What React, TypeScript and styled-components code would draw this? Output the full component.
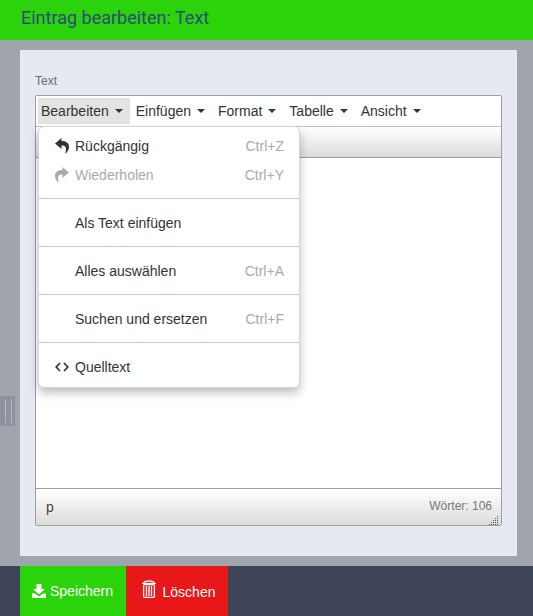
import styled, { createGlobalStyle } from "styled-components";

const GlobalStyle = createGlobalStyle`
html, body {
  margin: 0;
  padding: 0;
  background: #a0a4ad;
}
* {
  box-sizing: border-box;
}
`;

const menus = ["Bearbeiten", "Einfügen", "Format", "Tabelle", "Ansicht"];

function UndoIcon() {
  return (
    <svg width="14" height="16" viewBox="0 0 14 16">
      <path d="M6.5 0 L0 5.5 L6.5 11 V7.6 C9.4 7.4 10.8 8.6 10.9 10.8 C11 12.6 10.8 14.4 10.2 16 C12.8 14 14 11.4 14 8.8 C14 5 11 3 6.5 3 Z" fill="currentColor" />
    </svg>
  );
}

function RedoIcon() {
  return (
    <svg width="14" height="16" viewBox="0 0 14 16">
      <path d="M7.5 0 L14 5.5 L7.5 11 V7.6 C4.6 7.4 3.2 8.6 3.1 10.8 C3 12.6 3.2 14.4 3.8 16 C1.2 14 0 11.4 0 8.8 C0 5 3 3 7.5 3 Z" fill="currentColor" />
    </svg>
  );
}

function CodeIcon() {
  return (
    <svg width="14" height="10" viewBox="0 0 14 10">
      <path d="M5 1 L1.2 5 L5 9 M9 1 L12.8 5 L9 9" fill="none" stroke="currentColor" strokeWidth="1.7" />
    </svg>
  );
}

function SaveIcon() {
  return (
    <svg width="14" height="14" viewBox="0 0 14 14">
      <path d="M4.5 0 H9.5 V5 H13 L7 10.5 L1 5 H4.5 Z M0 9.5 H3 L7 12.5 L11 9.5 H14 V14 H0 Z" fill="#fff" />
    </svg>
  );
}

function TrashIcon() {
  return (
    <svg width="14" height="18" viewBox="0 0 14 18">
      <path d="M1.5 2.6 C3.5 0.2 10.5 0.2 12.5 2.6" fill="none" stroke="#fff" strokeWidth="1.3" />
      <rect x="0" y="2.8" width="14" height="1.2" fill="#fff" />
      <rect x="1.6" y="4.6" width="10.8" height="12.8" rx="1" fill="none" stroke="#fff" strokeWidth="1.3" />
      <path d="M4.5 6 V16 M7 6 V16 M9.5 6 V16" stroke="#fff" strokeWidth="1.3" />
    </svg>
  );
}

function ResizeGrip() {
  const dots: [number, number][] = [];
  for (let row = 0; row < 5; row++) {
    for (let col = 4 - row; col < 5; col++) {
      dots.push([col * 2, row * 2]);
    }
  }
  return (
    <svg width="10" height="10" viewBox="0 0 10 10">
      {dots.map(([x, y]) => (
        <rect key={`${x}-${y}`} x={x} y={y} width="1" height="1" fill="#555" />
      ))}
    </svg>
  );
}

export default function App() {
  return (
    <Page>
      <GlobalStyle />
      <Header>Eintrag bearbeiten: Text</Header>
      <Main>
        <Panel>
          <FieldLabel>Text</FieldLabel>
          <Editor>
            <MenuBar>
              {menus.map((name, index) => (
                <MenuButton key={name} $active={index === 0}>
                  {name}
                  <Caret />
                </MenuButton>
              ))}
            </MenuBar>
            <ToolBar />
            <EditArea />
            <StatusBar>
              <span>p</span>
              <WordCount>Wörter: 106</WordCount>
              <Grip>
                <ResizeGrip />
              </Grip>
            </StatusBar>
            <Dropdown>
              <MenuItem>
                <ItemIcon><UndoIcon /></ItemIcon>
                <ItemLabel>Rückgängig</ItemLabel>
                <Shortcut>Ctrl+Z</Shortcut>
              </MenuItem>
              <MenuItem $disabled>
                <ItemIcon><RedoIcon /></ItemIcon>
                <ItemLabel>Wiederholen</ItemLabel>
                <Shortcut>Ctrl+Y</Shortcut>
              </MenuItem>
              <Divider />
              <MenuItem>
                <ItemIcon />
                <ItemLabel>Als Text einfügen</ItemLabel>
              </MenuItem>
              <Divider />
              <MenuItem>
                <ItemIcon />
                <ItemLabel>Alles auswählen</ItemLabel>
                <Shortcut>Ctrl+A</Shortcut>
              </MenuItem>
              <Divider />
              <MenuItem>
                <ItemIcon />
                <ItemLabel>Suchen und ersetzen</ItemLabel>
                <Shortcut>Ctrl+F</Shortcut>
              </MenuItem>
              <Divider />
              <MenuItem>
                <ItemIcon><CodeIcon /></ItemIcon>
                <ItemLabel>Quelltext</ItemLabel>
              </MenuItem>
            </Dropdown>
          </Editor>
        </Panel>
        <SideHandle />
      </Main>
      <Footer>
        <SaveButton>
          <SaveIcon />
          Speichern
        </SaveButton>
        <DeleteButton>
          <TrashWrap>
            <TrashIcon />
          </TrashWrap>
          <DeleteLabel>Löschen</DeleteLabel>
        </DeleteButton>
      </Footer>
    </Page>
  );
}

const Page = styled.div`
  width: 533px;
  height: 616px;
  display: flex;
  flex-direction: column;
  overflow: hidden;
  background: #a0a4ad;
  font-family: "Liberation Sans", Arial, sans-serif;
`;

const Header = styled.header`
  height: 40px;
  padding-left: 21px;
  background: #2bd40a;
  color: #2f4a7a;
  font-family: Roboto, sans-serif;
  font-size: 18px;
  line-height: 36px;
`;

const Main = styled.main`
  position: relative;
  height: 526px;
  padding: 10px 16px 10px 20px;
`;

const Panel = styled.section`
  height: 506px;
  padding: 24px 15px 0;
  background: #e6e9f2;
`;

const FieldLabel = styled.div`
  height: 21px;
  color: #6b6b75;
  font-size: 12px;
  line-height: 14px;
`;

const Editor = styled.div`
  position: relative;
  height: 431px;
  display: flex;
  flex-direction: column;
  border: 1px solid #9e9e9e;
  border-radius: 2px;
  background: #fff;
`;

const MenuBar = styled.div`
  height: 31px;
  display: flex;
  gap: 1px;
  padding: 2px 2px 0;
  border-bottom: 1px solid #c0c0c0;
  background: #fff;
`;

const MenuButton = styled.div<{ $active?: boolean }>`
  height: 26px;
  display: flex;
  align-items: center;
  padding: 0 5px 0 3px;
  margin-right: 2px;
  background: ${(props) => (props.$active ? "#e3e3e3" : "transparent")};
  color: #333;
  font-size: 14px;
`;

const Caret = styled.span`
  width: 0;
  height: 0;
  margin-left: 6px;
  margin-right: 2px;
  border-left: 4px solid transparent;
  border-right: 4px solid transparent;
  border-top: 4px solid #333;
`;

const ToolBar = styled.div`
  height: 31px;
  border-bottom: 1px solid #9e9e9e;
  background: linear-gradient(to bottom, #ffffff, #dcdcdc);
`;

const EditArea = styled.div`
  flex: 1;
  background: #fff;
`;

const StatusBar = styled.div`
  position: relative;
  height: 37px;
  display: flex;
  align-items: center;
  justify-content: space-between;
  padding: 0 9px 0 10px;
  border-top: 1px solid #9e9e9e;
  background: linear-gradient(to bottom, #ffffff, #dcdcdc);
  color: #444;
  font-size: 14px;
`;

const WordCount = styled.span`
  margin-top: -3px;
  color: #777;
  font-size: 12px;
`;

const Grip = styled.div`
  position: absolute;
  right: 2px;
  bottom: 0;
  height: 12px;
`;

const Dropdown = styled.div`
  position: absolute;
  top: 30px;
  left: 2px;
  width: 262px;
  height: 262px;
  padding: 4px 0;
  border: 1px solid #d5d5d5;
  border-radius: 6px;
  background: #fff;
  box-shadow: 0 5px 10px rgba(0, 0, 0, 0.25);
`;

const MenuItem = styled.div<{ $disabled?: boolean }>`
  height: 29px;
  display: flex;
  align-items: center;
  padding: 0 15px 0 16px;
  color: ${(props) => (props.$disabled ? "#aaa" : "#333")};
  font-size: 14px;
`;

const ItemIcon = styled.span`
  width: 20px;
  display: flex;
  align-items: center;
`;

const ItemLabel = styled.span`
  flex: 1;
`;

const Shortcut = styled.span`
  color: #aaa;
`;

const Divider = styled.div`
  height: 1px;
  margin: 9px 0;
  background: #ccc;
`;

const SideHandle = styled.div`
  position: absolute;
  left: 0;
  top: 356px;
  width: 15px;
  height: 30px;
  background: #8d939e;
  &::before {
    content: "";
    position: absolute;
    left: 5px;
    top: 3px;
    width: 5px;
    height: 24px;
    border-left: 1px solid #b4b8bf;
    border-right: 1px solid #b4b8bf;
  }
`;

const Footer = styled.footer`
  height: 50px;
  display: flex;
  padding-left: 20px;
  background: #3e4558;
`;

const SaveButton = styled.div`
  width: 106px;
  display: flex;
  align-items: center;
  justify-content: center;
  gap: 4px;
  padding-right: 1px;
  background: #2bd40a;
  color: #fff;
  font-size: 14px;
`;

const DeleteButton = styled.div`
  width: 102px;
  display: flex;
  align-items: center;
  justify-content: center;
  gap: 7px;
  padding-left: 3px;
  background: #e91818;
  color: #fff;
  font-size: 14px;
`;

const TrashWrap = styled.span`
  display: flex;
  margin-top: -4px;
`;

const DeleteLabel = styled.span`
  margin-top: 2px;
`;
